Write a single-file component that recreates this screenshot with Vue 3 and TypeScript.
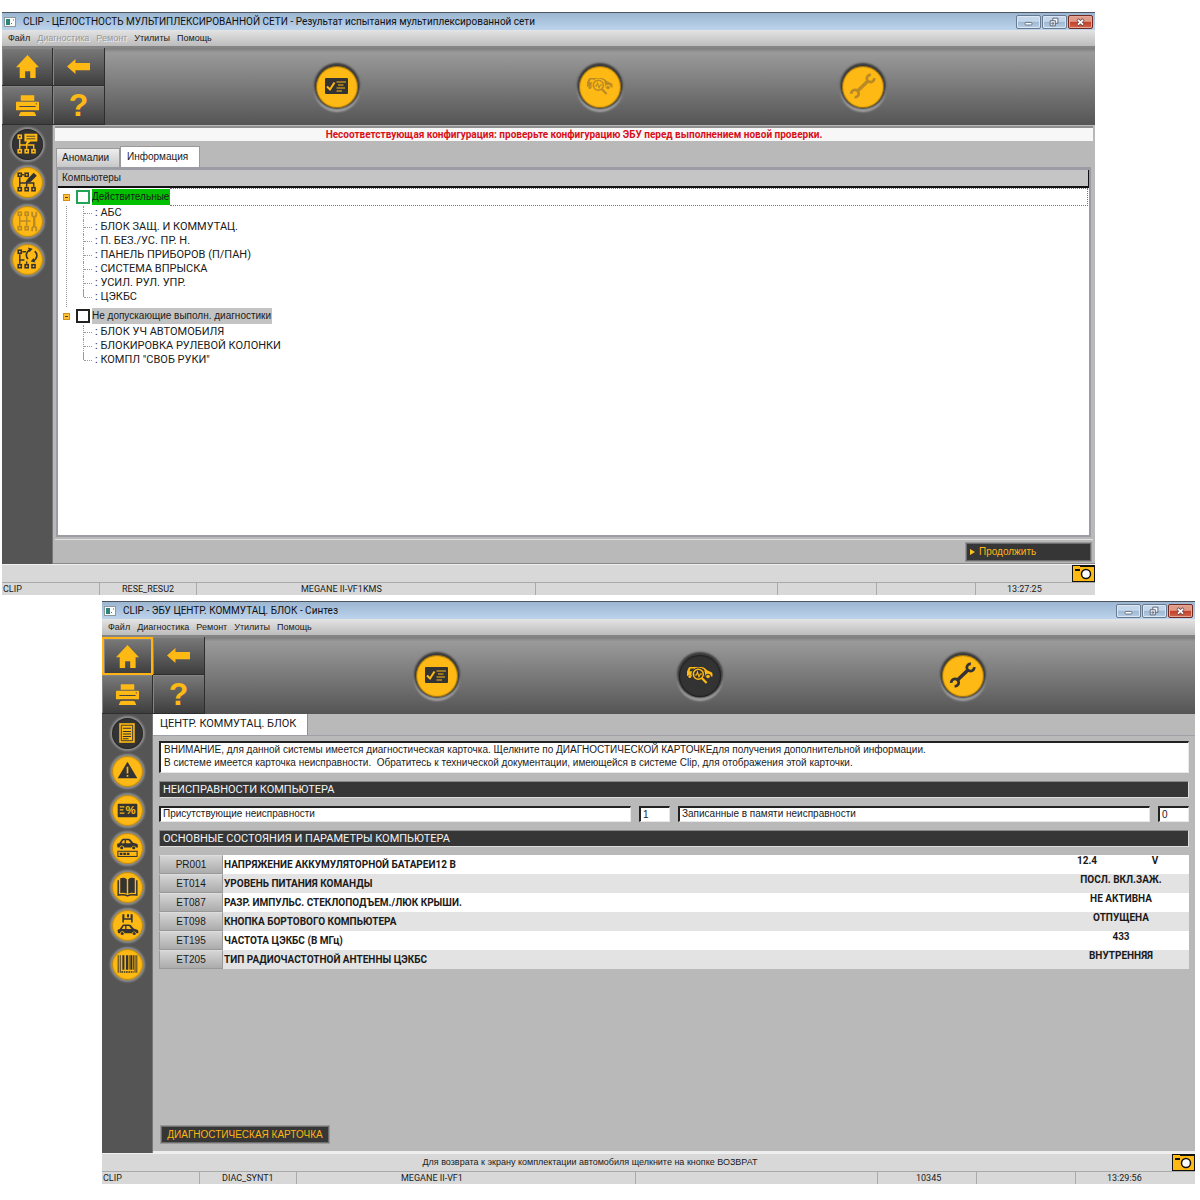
<script setup lang="ts">
import { ref } from 'vue'

type Look = 'normal' | 'active' | 'dim'
interface RoundButton { icon: string; label: string; look: Look }
interface MenuEntry { text: string; disabled?: boolean }
interface AppWindow {
  id: string
  title: string
  menu: MenuEntry[]
  homeFocused: boolean
  steps: RoundButton[]
  tools: RoundButton[]
  hint: string
  status: string[]
}

const node = (x: number, y: number) =>
  `<rect x="${x}" y="${y}" width="3" height="3" fill="none" stroke="currentColor" stroke-width="1.5"/>`
const network =
  node(6, 6) + node(6, 20) + node(12.7, 20) + node(19.3, 20) +
  '<path d="M7.5 10V19M7.5 15.5H21V19M14.2 13V19" fill="none" stroke="currentColor" stroke-width="1.4"/>'
const car =
  '<path d="M0 7.5V5L2 4.5L4.5 .8Q5 0 6 0H11Q12 0 12.8 .8L15.5 4L19 5Q20 5.4 20 6.5V8.5H18.2A2.3 2.3 0 0 0 13.8 8.5H6.7A2.3 2.3 0 0 0 2.2 8.5H.8ZM4 4.3H7.2V1.5H5.8ZM8.5 4.3H13.3L11 1.5H8.5Z" fill="currentColor" fill-rule="evenodd"/><circle cx="4.4" cy="8.8" r="1.5" fill="currentColor"/><circle cx="16" cy="8.8" r="1.5" fill="currentColor"/>'

const icons: Record<string, string> = {
  check:
    '<rect x="9" y="12" width="23" height="16" rx="1" fill="currentColor"/><path d="M11 20.5L14 23.5L18.5 16.5" fill="none" stroke="var(--face)" stroke-width="2"/><path d="M20.5 16H30M22 19H27.5M20.5 22H29M20.5 25H26" stroke="var(--face)" stroke-width="1"/>',
  scan:
    '<path d="M8 21V16.5L9.5 13Q10 12 11.5 12H21.5Q24 12 25.5 13L28.5 15.5L32 17Q33.5 17.5 33.5 19V21.5H31.8A2.8 2.8 0 0 0 26.2 21.5H12.5A2.3 2.3 0 0 0 8.5 21ZM10.5 16.3H14L15 13.5H11.6ZM22 13.5V16H26L24 13.7Z" fill="currentColor" fill-rule="evenodd"/><circle cx="10.8" cy="21.5" r="1.5" fill="currentColor"/><circle cx="29" cy="21.5" r="1.8" fill="currentColor"/><circle cx="19.3" cy="19.3" r="6.8" fill="var(--face)"/><circle cx="19.3" cy="19.3" r="5" fill="var(--face)" stroke="currentColor" stroke-width="1.5"/><path d="M15.5 20H17.5L18.5 17L20 21.8L21.3 19H23" fill="none" stroke="currentColor" stroke-width="1.1"/><path d="M23 23.3L27.6 28" stroke="currentColor" stroke-width="2.2"/>',
  wrench:
    '<path d="M15 25.5L26.5 14.5" stroke="currentColor" stroke-width="3.6"/><path d="M28.9 8.8A3.7 3.7 0 1 0 32.2 12.1M12.6 31.2A3.7 3.7 0 1 0 9.3 27.9" fill="none" stroke="currentColor" stroke-width="2.8"/>',
  netChat:
    network + '<path d="M12 4.5H24.5V12H18L14.5 15V12H12Z" fill="currentColor"/><path d="M14 7H22.5M14 9.5H22.5" stroke="var(--face)" stroke-width=".8"/>',
  netEdit:
    network + node(12.7, 6) + '<path d="M14 15.5L15 11.5L21 5.5L24 8.5L18 14.5Z" fill="currentColor"/><path d="M9 7.5H12" stroke="currentColor" stroke-width="1.3"/>',
  netTools:
    node(6, 6) + node(12.7, 6) + node(6, 20) + node(12.7, 20) +
    '<path d="M7.5 10V19M14.2 10V19M7.5 14.5H18" stroke="currentColor" stroke-width="1.4" fill="none"/><path d="M21.5 11V20" stroke="currentColor" stroke-width="2.4"/><path d="M19.5 5.5V8.5Q19.5 10.5 21.5 10.5T23.5 8.5V5.5M19.5 24.5V22Q19.5 20 21.5 20T23.5 22V24.5" fill="none" stroke="currentColor" stroke-width="1.8"/>',
  netSync:
    node(6, 6) + node(6, 20) + node(12.7, 20) + node(19.3, 20) +
    '<path d="M7.5 10V19M7.5 15.5H12M10 7.5H13.5M14.2 17V19" fill="none" stroke="currentColor" stroke-width="1.4"/><path d="M17 5.8A5.4 5.4 0 0 0 15.5 14.5M20.5 16.3A5.4 5.4 0 0 0 22 7" fill="none" stroke="currentColor" stroke-width="1.6"/><path d="M15.5 3.5L20 4.5L17 8ZM22.5 18L18 17L21 13.5Z" fill="currentColor"/>',
  document:
    '<path d="M7 5H22V24H7Z" fill="currentColor"/><path d="M9 7H20V22H9Z" fill="none" stroke="var(--face)" stroke-width=".9"/><path d="M10.5 10H18.5M10.5 13H18.5M10.5 15.5H18.5M10.5 18H18.5M10.5 20H16" stroke="var(--face)" stroke-width="1"/>',
  warning:
    '<path d="M15 5.5L24.5 21.5H5.5Z" fill="currentColor"/><path d="M15 10.5V17M15 18.3V20" stroke="var(--face)" stroke-width="1.6"/>',
  percent:
    '<rect x="5.5" y="8.5" width="19" height="13" rx="1" fill="currentColor"/><path d="M7.5 11.5H12M7.5 14.5H11M7.5 17.5H12" stroke="var(--face)" stroke-width="1.2"/><text x="13" y="18.5" font-size="11" font-weight="700" fill="var(--face)">%</text>',
  carBar:
    `<g transform="translate(5 5.5)">${car}</g><rect x="5.7" y="17.7" width="18.6" height="5" fill="none" stroke="currentColor"/><path d="M7.5 20.2H17" stroke="currentColor" stroke-width="2.4" stroke-dasharray="2.6 .8"/>`,
  book:
    '<path d="M8 6Q12 5 14.3 7V21Q12 19.5 8 20.3ZM22 6Q18 5 15.7 7V21Q18 19.5 22 20.3Z" fill="currentColor"/><path d="M6 8V22.3Q12 21.3 15 23Q18 21.3 24 22.3V8" fill="none" stroke="currentColor" stroke-width="1.4"/>',
  carSave:
    `<path d="M10 4H12V8H18V4H20V12H18.5V9.5H11.5V12H10ZM14.5 4H16.5V7H14.5Z" fill="currentColor"/><g transform="translate(5.5 14)">${car}</g>`,
  barcode:
    '<path d="M6 6V23M24 6V23M8 6V23M22.3 6V23" stroke="currentColor" stroke-width=".9"/><path d="M11 6V20M14.5 6V20M18.7 6V20" stroke="currentColor" stroke-width="2"/><path d="M16.6 6V20M20.8 6V20" stroke="currentColor" stroke-width=".8"/><path d="M9 22.3H21" stroke="currentColor" stroke-width="1.4" stroke-dasharray="1.6 .7"/>',
}

const windows: AppWindow[] = [
  {
    id: 'network',
    title: 'CLIP - ЦЕЛОСТНОСТЬ МУЛЬТИПЛЕКСИРОВАННОЙ СЕТИ - Результат испытания мультиплексированной сети',
    menu: [
      { text: 'Файл' },
      { text: 'Диагностика', disabled: true },
      { text: 'Ремонт', disabled: true },
      { text: 'Утилиты' },
      { text: 'Помощь' },
    ],
    homeFocused: false,
    steps: [
      { icon: 'check', label: 'Идентификация', look: 'normal' },
      { icon: 'scan', label: 'Диагностика', look: 'dim' },
      { icon: 'wrench', label: 'Ремонт', look: 'dim' },
    ],
    tools: [
      { icon: 'netChat', label: 'Результат', look: 'active' },
      { icon: 'netEdit', label: 'Изменить', look: 'normal' },
      { icon: 'netTools', label: 'Ремонт сети', look: 'dim' },
      { icon: 'netSync', label: 'Повторить', look: 'normal' },
    ],
    hint: '',
    status: ['CLIP', 'RESE_RESU2', 'MEGANE II-VF1KMS', '', '', '', '13:27:25'],
  },
  {
    id: 'ecu',
    title: 'CLIP - ЭБУ ЦЕНТР. КОММУТАЦ. БЛОК - Синтез',
    menu: [
      { text: 'Файл' },
      { text: 'Диагностика' },
      { text: 'Ремонт' },
      { text: 'Утилиты' },
      { text: 'Помощь' },
    ],
    homeFocused: true,
    steps: [
      { icon: 'check', label: 'Идентификация', look: 'normal' },
      { icon: 'scan', label: 'Диагностика', look: 'active' },
      { icon: 'wrench', label: 'Ремонт', look: 'normal' },
    ],
    tools: [
      { icon: 'document', label: 'Синтез', look: 'active' },
      { icon: 'warning', label: 'Неисправности', look: 'normal' },
      { icon: 'percent', label: 'Параметры', look: 'normal' },
      { icon: 'carBar', label: 'Состояния', look: 'normal' },
      { icon: 'book', label: 'Документация', look: 'normal' },
      { icon: 'carSave', label: 'Сохранить', look: 'normal' },
      { icon: 'barcode', label: 'Идентификация', look: 'normal' },
    ],
    hint: 'Для возврата к экрану комплектации автомобиля щелкните на кнопке ВОЗВРАТ',
    status: ['CLIP', 'DIAC_SYNT1', 'MEGANE II-VF1', '', '10345', '', '13:29:56'],
  },
]

const groups = ref([
  {
    id: 'valid',
    name: 'Действительные',
    checked: false,
    items: ['АБС', 'БЛОК ЗАЩ. И КОММУТАЦ.', 'П. БЕЗ./УС. ПР. Н.', 'ПАНЕЛЬ ПРИБОРОВ (П/ПАН)', 'СИСТЕМА ВПРЫСКА', 'УСИЛ. РУЛ. УПР.', 'ЦЭКБС'],
  },
  {
    id: 'undiag',
    name: 'Не допускающие выполн. диагностики',
    checked: false,
    items: ['БЛОК УЧ АВТОМОБИЛЯ', 'БЛОКИРОВКА РУЛЕВОЙ КОЛОНКИ', 'КОМПЛ "СВОБ РУКИ"'],
  },
])

const parameters: { code: string; name: string; value: string; unit?: string }[] = [
  { code: 'PR001', name: 'НАПРЯЖЕНИЕ АККУМУЛЯТОРНОЙ БАТАРЕИ12 В', value: '12.4', unit: 'V' },
  { code: 'ET014', name: 'УРОВЕНЬ ПИТАНИЯ КОМАНДЫ', value: 'ПОСЛ. ВКЛ.ЗАЖ.' },
  { code: 'ET087', name: 'РАЗР. ИМПУЛЬС. СТЕКЛОПОДЪЕМ./ЛЮК КРЫШИ.', value: 'НЕ АКТИВНА' },
  { code: 'ET098', name: 'КНОПКА БОРТОВОГО КОМПЬЮТЕРА', value: 'ОТПУЩЕНА' },
  { code: 'ET195', name: 'ЧАСТОТА ЦЭКБС (В МГц)', value: '433' },
  { code: 'ET205', name: 'ТИП РАДИОЧАСТОТНОЙ АНТЕННЫ ЦЭКБС', value: 'ВНУТРЕННЯЯ' },
]
</script>

<template>
  <main class="desktop">
    <section v-for="w in windows" :key="w.id" class="window" :class="`window-${w.id}`">
      <header class="titlebar">
        <svg class="app-icon" viewBox="0 0 12 10" aria-hidden="true">
          <rect x=".5" y=".5" width="11" height="9" fill="#fafcfc" stroke="#8d979c" />
          <rect x="2" y="2" width="4" height="6" fill="#2c8577" />
          <path d="M7 6.5H8M9 3H10" stroke="#4a6a86" />
        </svg>
        <h1>{{ w.title }}</h1>
        <div class="controls">
          <button type="button" aria-label="Свернуть">
            <svg viewBox="0 0 25 14"><rect x="8.5" y="7.5" width="8" height="3" rx="1" fill="#fff" stroke="#5a6577" /></svg>
          </button>
          <button type="button" aria-label="Восстановить">
            <svg viewBox="0 0 25 14" fill="#f5f7fa" stroke="#4f5a6c"><path d="M10.5 2.5H16.5V8.5H10.5Z" /><path d="M7.5 5.5H13.5V11.5H7.5Z" /><path d="M9.5 8H11.5V9.5H9.5Z" /></svg>
          </button>
          <button type="button" class="close" aria-label="Закрыть">
            <svg viewBox="0 0 25 14"><path d="M9 4L16 10.5M16 4L9 10.5" stroke="#64444a" stroke-width="3.6" /><path d="M9.5 4.4L15.5 10.1M15.5 4.4L9.5 10.1" stroke="#fff" stroke-width="2" /></svg>
          </button>
        </div>
      </header>

      <nav class="menu">
        <button v-for="m in w.menu" :key="m.text" type="button" :disabled="m.disabled">{{ m.text }}</button>
      </nav>

      <div class="toolbar">
        <div class="nav-keys">
          <button type="button" :class="{ focused: w.homeFocused }" aria-label="Домой">
            <svg viewBox="0 0 68 68"><path d="M34 0L68 36H58V68H42V48H27V68H11V36H0Z" /></svg>
          </button>
          <button type="button" aria-label="Назад">
            <svg viewBox="0 0 68 68"><path d="M0 34L25 12V24H68V45H25V56Z" /></svg>
          </button>
          <button type="button" aria-label="Печать">
            <svg viewBox="0 0 68 68"><path d="M14 4H54V20H14ZM2 23H66Q68 23 68 26V48H0V26Q0 23 2 23ZM14 51H54L60 65H8Z" /><path d="M10 37H58M14 54V51H54V54" fill="none" stroke="#444" stroke-width="3" /><circle cx="60" cy="29" r="2" fill="#444" /></svg>
          </button>
          <button type="button" class="help" aria-label="Справка">?</button>
        </div>
        <div class="steps">
          <button v-for="s in w.steps" :key="s.icon" type="button" class="round large" :class="s.look" :aria-label="s.label">
            <svg viewBox="0 0 42 42" v-html="icons[s.icon]"></svg>
          </button>
        </div>
      </div>

      <div class="body">
        <aside class="sidebar">
          <button v-for="t in w.tools" :key="t.icon" type="button" class="round small" :class="t.look" :aria-label="t.label">
            <svg viewBox="0 0 30 30" v-html="icons[t.icon]"></svg>
          </button>
        </aside>

        <div v-if="w.id === 'network'" class="content network">
          <p class="alert">Несоответствующая конфигурация: проверьте конфигурацию ЭБУ перед выполнением новой проверки.</p>
          <div class="tabs" role="tablist">
            <button type="button" role="tab" aria-selected="false">Аномалии</button>
            <button type="button" role="tab" aria-selected="true" class="current">Информация</button>
          </div>
          <div class="panel">
            <h2>Компьютеры</h2>
            <ul class="tree">
              <li v-for="g in groups" :key="g.id" class="group" :class="g.id">
                <div class="group-row">
                  <button type="button" class="expander" :aria-label="`Свернуть: ${g.name}`"></button>
                  <input :id="`group-${g.id}`" v-model="g.checked" type="checkbox" />
                  <label :for="`group-${g.id}`">{{ g.name }}</label>
                  <span class="focus-rest"></span>
                </div>
                <ul class="leaves">
                  <li v-for="item in g.items" :key="item">: {{ item }}</li>
                </ul>
              </li>
            </ul>
          </div>
          <footer class="actions">
            <button type="button" class="dark-button proceed"><span class="arrow"></span>Продолжить</button>
          </footer>
        </div>

        <div v-else class="content ecu">
          <div class="ecu-tabs" role="tablist">
            <button type="button" role="tab" aria-selected="true">ЦЕНТР. КОММУТАЦ. БЛОК</button>
          </div>
          <div class="ecu-main">
            <div class="notice sunken">
              <p>ВНИМАНИЕ, для данной системы имеется диагностическая карточка. Щелкните по ДИАГНОСТИЧЕСКОЙ КАРТОЧКЕдля получения дополнительной информации.</p>
              <p>В системе имеется карточка неисправности.&nbsp; Обратитесь к технической документации, имеющейся в системе Clip, для отображения этой карточки.</p>
            </div>
            <h2 class="section">НЕИСПРАВНОСТИ КОМПЬЮТЕРА</h2>
            <div class="counts">
              <label class="sunken" for="present">Присутствующие неисправности</label>
              <input id="present" class="sunken" value="1" readonly />
              <label class="sunken" for="stored">Записанные в памяти неисправности</label>
              <input id="stored" class="sunken" value="0" readonly />
            </div>
            <h2 class="section">ОСНОВНЫЕ СОСТОЯНИЯ И ПАРАМЕТРЫ КОМПЬЮТЕРА</h2>
            <table class="params">
              <colgroup><col class="c-code" /><col /><col class="c-val" /><col class="c-val" /></colgroup>
              <tbody>
                <tr v-for="p in parameters" :key="p.code">
                  <td class="code"><button type="button">{{ p.code }}</button></td>
                  <th scope="row">{{ p.name }}</th>
                  <td class="value" :colspan="p.unit ? 1 : 2">{{ p.value }}</td>
                  <td v-if="p.unit" class="value">{{ p.unit }}</td>
                </tr>
              </tbody>
            </table>
            <button type="button" class="dark-button card">ДИАГНОСТИЧЕСКАЯ КАРТОЧКА</button>
          </div>
        </div>
      </div>

      <div class="hintbar">
        <p>{{ w.hint }}</p>
        <button type="button" aria-label="Снимок экрана">
          <svg viewBox="0 0 23 17"><rect x=".5" y=".5" width="22" height="16" fill="#ffb914" stroke="#111" /><path d="M3 5H8" stroke="#111" stroke-width="2" /><path d="M8 0H23V2H8Z" fill="#111" /><circle cx="14" cy="9" r="4.5" fill="#fff" stroke="#111" stroke-width="1.5" /></svg>
        </button>
      </div>
      <footer class="status">
        <span v-for="(s, i) in w.status" :key="i">{{ s }}</span>
      </footer>
    </section>
  </main>
</template>

<style>
body {
  margin: 0;
  background: #fff;
}
</style>

<style scoped>
.desktop {
  --caps: Roboto, "Liberation Sans", sans-serif;
  display: flex;
  flex-direction: column;
  gap: 6px;
  padding: 12px 5px 0 2px;
  font-family: "Liberation Sans", Arial, sans-serif;
  font-size: 10px;
  color: #1a1a1a;
}
.desktop * {
  box-sizing: border-box;
}
h1, h2, p, ul {
  margin: 0;
  padding: 0;
  font-weight: 400;
}
ul {
  list-style: none;
}
button, input {
  margin: 0;
  padding: 0;
  border: 0;
  border-radius: 0;
  background: none;
  font: inherit;
  color: inherit;
}
svg {
  display: block;
}
.window {
  background: #b9b9b9;
}
.window-network {
  margin-right: 100px;
}
.window-ecu {
  margin-left: 100px;
}

.titlebar {
  display: flex;
  align-items: center;
  height: 18px;
  padding: 0 2px;
  border-top: 1px solid #4c5560;
  background: linear-gradient(#9cb6d1, #bcd3ec);
}
.app-icon {
  width: 12px;
  height: 10px;
  margin-right: 7px;
}
.titlebar h1 {
  flex: 1;
  font-family: var(--caps);
  font-size: 10px;
  line-height: 16px;
  color: #111;
  white-space: nowrap;
}
.controls {
  display: flex;
  gap: 1px;
}
.controls button {
  width: 25px;
  height: 14px;
  border: 1px solid #66798f;
  border-radius: 2px;
  background: linear-gradient(#c3d6ea 45%, #9fb9d4 50%, #b7cde4);
  box-shadow: inset 0 0 0 1px #dbe7f3;
}
.controls svg {
  width: 23px;
  height: 12px;
}
.controls .close {
  border-color: #702a20;
  background: linear-gradient(#e09a88 45%, #c24029 50%, #d2654c);
  box-shadow: inset 0 0 0 1px #e6a898;
}

.menu {
  display: flex;
  gap: 7px;
  height: 18px;
  padding: 0 6px;
  border-bottom: 2px solid #858585;
  background: linear-gradient(#e4e4e4, #bcbcbc);
  font-size: 9px;
}
.menu button:disabled {
  color: #979797;
  text-shadow: 1px 1px 0 #eee;
}

.toolbar {
  display: flex;
  background: linear-gradient(#7c7c7c, #9a9a9a 6%, #555);
}
.nav-keys {
  display: grid;
  grid-template-columns: 51px 52px;
  grid-template-rows: 38px 39px;
}
.nav-keys button {
  display: flex;
  align-items: center;
  justify-content: center;
  border: 1px solid #2e2e2e;
  border-width: 0 1px 1px 0;
  background: linear-gradient(#7a7a7a, #3e3e3e);
  box-shadow: inset 1px 1px 0 #858585;
}
.nav-keys .focused {
  border: 2px solid #ffb414;
}
.nav-keys svg {
  width: 23px;
  height: 23px;
  fill: #ffb914;
}
.nav-keys .help {
  font-size: 32px;
  line-height: 36px;
  font-weight: 700;
  color: #ffb914;
}
.steps {
  flex: 1;
  display: flex;
  align-items: center;
  justify-content: space-between;
  padding: 0 211px;
}

.round {
  --face: #ffb914;
  border-radius: 50%;
  background: var(--face);
  color: #333;
}
.round svg {
  width: 100%;
  height: 100%;
}
.round.active {
  --face: #333;
  color: #ffb914;
}
.round.dim {
  color: #b98a26;
}
.large {
  width: 42px;
  height: 42px;
  box-shadow: inset 0 0 1px 1px #0006, 0 -1px 2px 2px #3a3a3a, 0 2px 2px 2px #a4a4a4;
}
.small {
  width: 31px;
  height: 31px;
  box-shadow: inset 0 0 1px 1px #0004, 0 0 2px 2px #8d8d8d;
}

.body {
  display: flex;
  min-height: 439px;
}
.sidebar {
  flex: none;
  width: 51px;
  display: grid;
  grid-auto-rows: 38px 39px;
  align-items: center;
  justify-items: center;
  align-content: start;
  border-right: 1px solid #777;
  background: #555;
}
.content {
  flex: 1;
  min-width: 0;
  display: flex;
  flex-direction: column;
}

.network {
  padding: 1px 2px 0;
  border-bottom: 1px solid #8a8a8a;
}
.alert {
  border-top: 2px solid #8f8f8f;
  background: #f7f7f7;
  font-family: var(--caps);
  font-size: 10px;
  line-height: 13px;
  font-weight: 700;
  text-align: center;
  color: #d9101a;
}
.tabs {
  display: flex;
  align-items: flex-end;
  margin-top: 5px;
  padding-left: 1px;
}
.tabs button {
  width: 64px;
  height: 19px;
  padding: 0 0 2px 5px;
  border: 1px solid #9a9a9a;
  border-bottom: 0;
  background: linear-gradient(#eee, #c8c8c8);
  text-align: left;
}
.tabs .current {
  width: 80px;
  height: 21px;
  padding-left: 6px;
  background: #fff;
}
.panel {
  flex: 1;
  margin: 0 2px 2px 1px;
  border: 2px solid #9c9ca4;
  border-top-width: 3px;
  background: #fff;
}
.panel h2 {
  padding-left: 4px;
  border-right: 1px solid #111;
  border-bottom: 2px solid #111;
  background: #c5c5c5;
  font-size: 10px;
  line-height: 16px;
}
.tree {
  padding-right: 1px;
}
.group {
  padding-left: 5px;
}
.group-row {
  display: flex;
  align-items: center;
  height: 18px;
}
.expander {
  width: 7px;
  height: 7px;
  margin-right: 6px;
  border: 1px solid #d58f10;
  background: linear-gradient(#5b3c00, #5b3c00) center / 3px 1px no-repeat #ffc23a;
}
.group-row input {
  appearance: none;
  width: 14px;
  height: 14px;
  margin-right: 2px;
  border: 2px solid #222;
  background: #fff;
}
.group-row input:checked {
  background: #888;
}
.group-row label {
  padding-right: 1px;
  line-height: 16px;
  background: #c3c3c3;
}
.valid .group-row input {
  border-color: #23a455;
}
.valid .group-row label {
  background: #00c000;
}
.focus-rest {
  flex: 1;
}
.valid .focus-rest {
  align-self: stretch;
  border: 1px dotted #777;
  border-left: 0;
}
.leaves {
  margin-left: 3px;
  padding-left: 16px;
  font-family: var(--caps);
  font-size: 11px;
}
.valid .leaves {
  padding-bottom: 3px;
  border-left: 1px dotted #999;
}
.undiag .leaves {
  margin-left: 4px;
}
.leaves li {
  display: flex;
  line-height: 14px;
  white-space: pre;
  border-left: 1px dotted #999;
}
.leaves li::before {
  content: "";
  width: 8px;
  height: 7px;
  margin-right: 3px;
  border-bottom: 1px dotted #999;
}
.leaves li:last-child {
  border-image: linear-gradient(#999 50%, transparent 50%) 1;
}
.actions {
  display: flex;
  justify-content: flex-end;
  height: 24px;
  padding: 2px 1px 0;
  border-top: 1px solid #e2e2e2;
}
.dark-button {
  border: 2px solid #6c6c6c;
  outline: 1px solid #999;
  outline-offset: -1px;
  background: #363636;
  color: #ffb414;
  font-size: 10px;
  line-height: 14px;
  white-space: nowrap;
}
.proceed {
  display: flex;
  align-items: center;
  gap: 4px;
  width: 127px;
  height: 20px;
  padding-left: 3px;
}
.arrow {
  border: 3px solid transparent;
  border-left: 5px solid #ffc21e;
  border-right: 0;
}

.ecu-tabs {
  height: 22px;
  border-bottom: 1px solid #a0a0a6;
}
.ecu-tabs button {
  height: 21px;
  width: 155px;
  padding: 0 0 2px 7px;
  border-right: 1px solid #8f8f8f;
  background: #fff;
  font-family: var(--caps);
  font-size: 11px;
  text-align: left;
  white-space: nowrap;
}
.ecu-main {
  flex: 1;
  display: flex;
  flex-direction: column;
  padding: 5px 6px 7px;
  border-bottom: 2px solid #eee;
}
.sunken {
  border: 1px solid #e8e8e8;
  border-top: 2px solid #222;
  border-left: 2px solid #222;
  background: #fff;
}
.notice {
  padding: 0 3px 3px;
  line-height: 13px;
}
.section {
  margin: 8px 0;
  padding-left: 3px;
  border: 1px solid #888;
  border-right-color: #ddd;
  border-bottom-color: #ddd;
  background: #363636;
  font-family: var(--caps);
  font-size: 11px;
  line-height: 15px;
  color: #f2f2f2;
}
.counts {
  display: grid;
  grid-template-columns: 1fr 31px 1fr 31px;
  gap: 8px;
}
.counts .sunken {
  width: 100%;
  height: 16px;
  padding-left: 2px;
  line-height: 12px;
}
.params {
  width: 100%;
  table-layout: fixed;
  border-collapse: collapse;
  font-family: var(--caps);
  font-weight: 700;
}
.c-code {
  width: 64px;
}
.c-val {
  width: 68px;
}
.params tr {
  height: 19px;
  background: #fff;
}
.params tr:nth-child(even) {
  background: #e3e3e3;
}
.params td, .params th {
  padding: 0;
}
.params th {
  padding-left: 1px;
  text-align: left;
  white-space: nowrap;
}
.code button {
  display: block;
  width: 64px;
  height: 19px;
  border: 1px solid #999;
  border-top-color: #ddd;
  background: linear-gradient(#d6d6d6, #ababab);
  font-family: "Liberation Sans", Arial, sans-serif;
  font-weight: 400;
}
.params .value {
  vertical-align: top;
  line-height: 12px;
  text-align: center;
}
.card {
  align-self: flex-start;
  width: 170px;
  height: 19px;
  margin-top: auto;
  margin-left: 1px;
  text-align: center;
}

.hintbar {
  display: flex;
  height: 18px;
  border-top: 1px solid #f0f0f0;
  background: #d8d8d8;
}
.hintbar p {
  flex: 1;
  padding-right: 94px;
  font-size: 9px;
  line-height: 16px;
  text-align: center;
}
.hintbar button, .hintbar svg {
  width: 23px;
  height: 17px;
}
.status {
  display: grid;
  grid-template-columns: 98px 97px 339fr 242fr 99px 99px 119px;
  border-top: 1px solid #aaa;
  background: #d8d8d8;
  font-family: var(--caps);
  font-size: 9px;
  line-height: 12px;
}
.status span {
  min-height: 12px;
  border-right: 1px solid #aaa;
  white-space: nowrap;
}
.status span:first-child {
  padding-left: 1px;
}
.status span:nth-child(2) {
  padding-left: 22px;
}
.status span:nth-child(3) {
  padding-left: 104px;
}
.status span:nth-child(5) {
  padding-left: 38px;
}
.status span:last-child {
  padding-left: 31px;
  border-right: 0;
}
</style>
